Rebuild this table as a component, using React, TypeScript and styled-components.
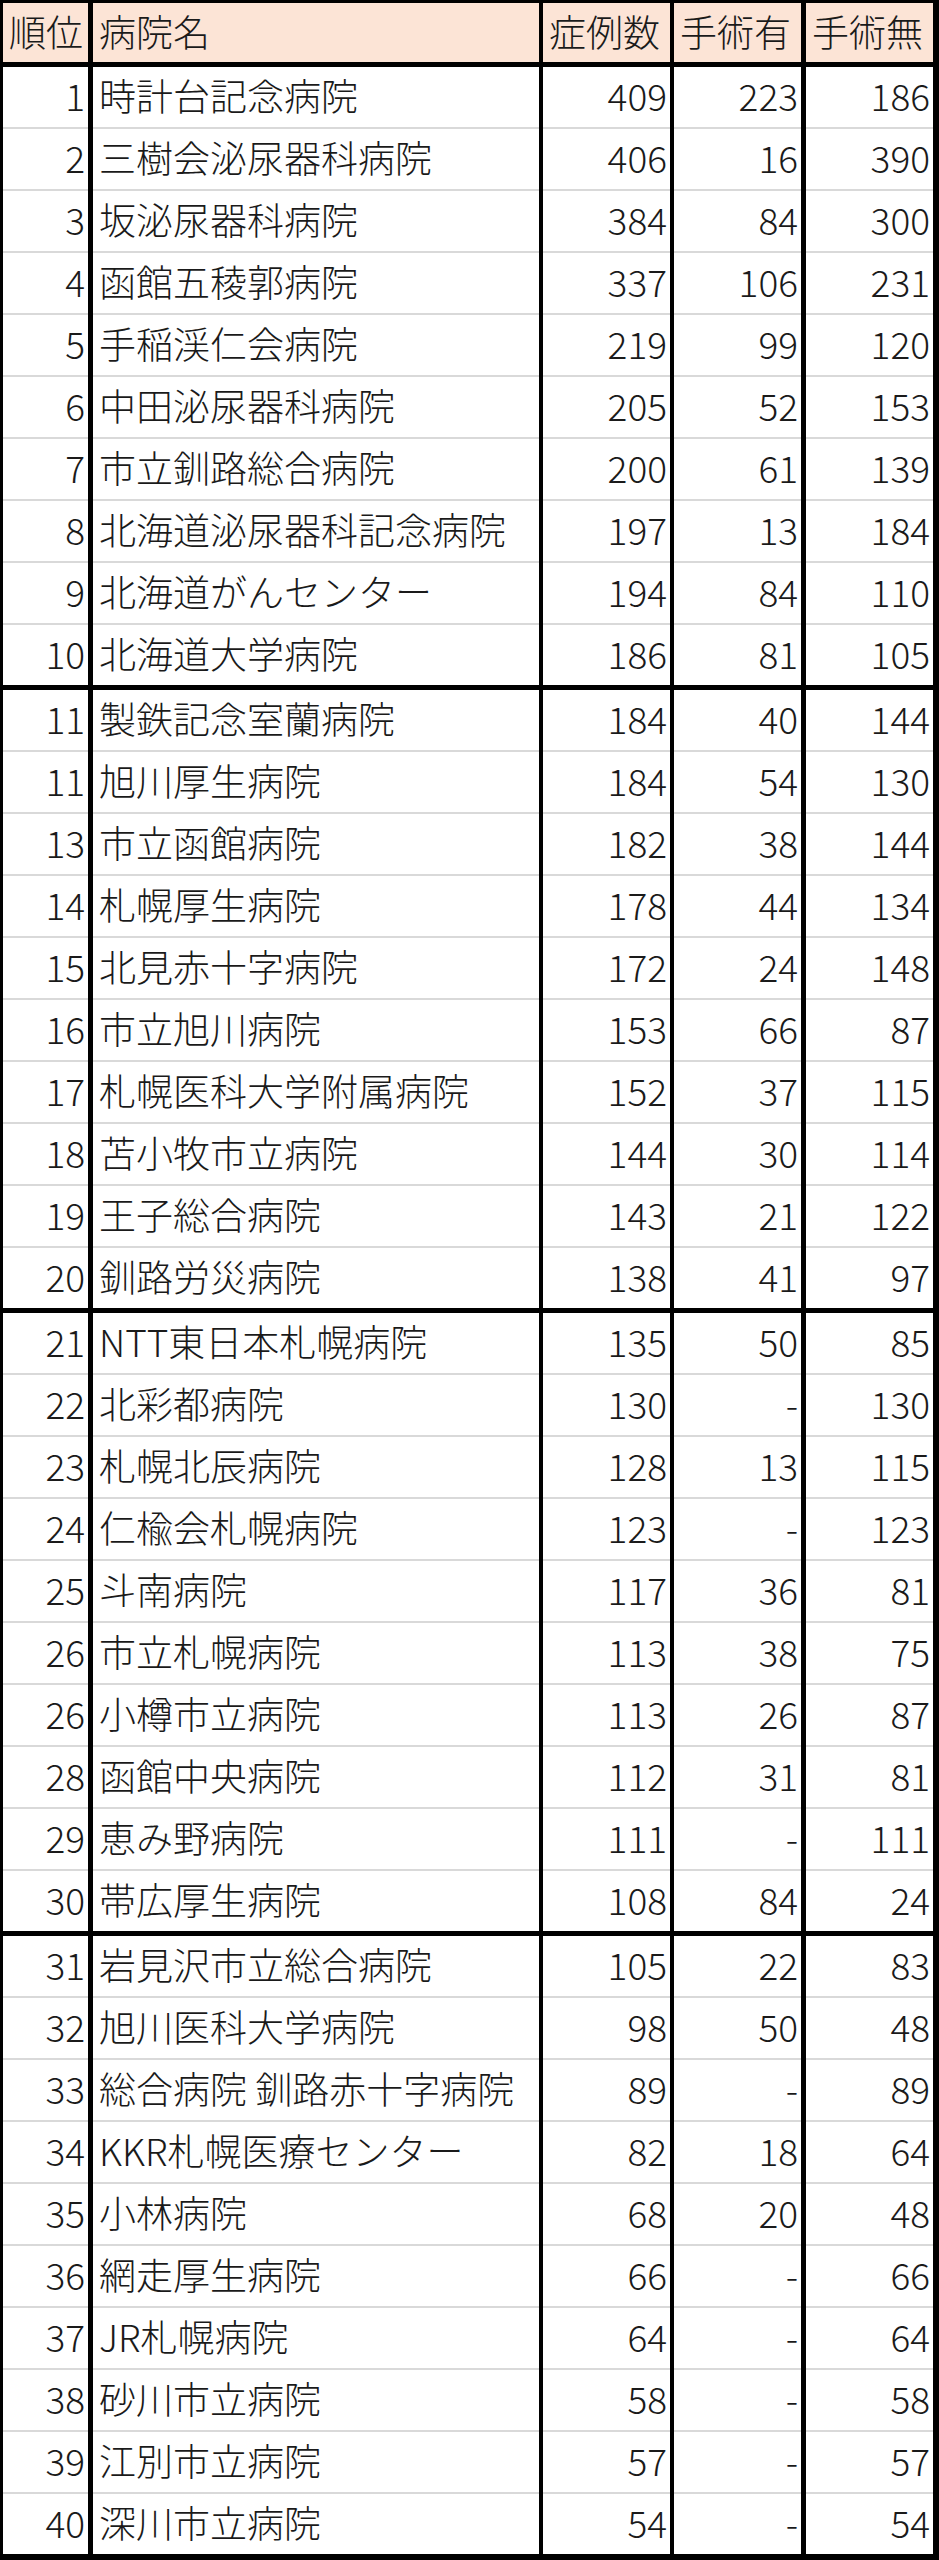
import React from "react";
import styled, { createGlobalStyle } from "styled-components";

type Hospital = {
  rank: number;
  name: string;
  cases: number;
  surgery: number | null;
  noSurgery: number;
};

const hospitals: Hospital[] = [
  { rank: 1, name: "時計台記念病院", cases: 409, surgery: 223, noSurgery: 186 },
  { rank: 2, name: "三樹会泌尿器科病院", cases: 406, surgery: 16, noSurgery: 390 },
  { rank: 3, name: "坂泌尿器科病院", cases: 384, surgery: 84, noSurgery: 300 },
  { rank: 4, name: "函館五稜郭病院", cases: 337, surgery: 106, noSurgery: 231 },
  { rank: 5, name: "手稲渓仁会病院", cases: 219, surgery: 99, noSurgery: 120 },
  { rank: 6, name: "中田泌尿器科病院", cases: 205, surgery: 52, noSurgery: 153 },
  { rank: 7, name: "市立釧路総合病院", cases: 200, surgery: 61, noSurgery: 139 },
  { rank: 8, name: "北海道泌尿器科記念病院", cases: 197, surgery: 13, noSurgery: 184 },
  { rank: 9, name: "北海道がんセンター", cases: 194, surgery: 84, noSurgery: 110 },
  { rank: 10, name: "北海道大学病院", cases: 186, surgery: 81, noSurgery: 105 },
  { rank: 11, name: "製鉄記念室蘭病院", cases: 184, surgery: 40, noSurgery: 144 },
  { rank: 11, name: "旭川厚生病院", cases: 184, surgery: 54, noSurgery: 130 },
  { rank: 13, name: "市立函館病院", cases: 182, surgery: 38, noSurgery: 144 },
  { rank: 14, name: "札幌厚生病院", cases: 178, surgery: 44, noSurgery: 134 },
  { rank: 15, name: "北見赤十字病院", cases: 172, surgery: 24, noSurgery: 148 },
  { rank: 16, name: "市立旭川病院", cases: 153, surgery: 66, noSurgery: 87 },
  { rank: 17, name: "札幌医科大学附属病院", cases: 152, surgery: 37, noSurgery: 115 },
  { rank: 18, name: "苫小牧市立病院", cases: 144, surgery: 30, noSurgery: 114 },
  { rank: 19, name: "王子総合病院", cases: 143, surgery: 21, noSurgery: 122 },
  { rank: 20, name: "釧路労災病院", cases: 138, surgery: 41, noSurgery: 97 },
  { rank: 21, name: "NTT東日本札幌病院", cases: 135, surgery: 50, noSurgery: 85 },
  { rank: 22, name: "北彩都病院", cases: 130, surgery: null, noSurgery: 130 },
  { rank: 23, name: "札幌北辰病院", cases: 128, surgery: 13, noSurgery: 115 },
  { rank: 24, name: "仁楡会札幌病院", cases: 123, surgery: null, noSurgery: 123 },
  { rank: 25, name: "斗南病院", cases: 117, surgery: 36, noSurgery: 81 },
  { rank: 26, name: "市立札幌病院", cases: 113, surgery: 38, noSurgery: 75 },
  { rank: 26, name: "小樽市立病院", cases: 113, surgery: 26, noSurgery: 87 },
  { rank: 28, name: "函館中央病院", cases: 112, surgery: 31, noSurgery: 81 },
  { rank: 29, name: "恵み野病院", cases: 111, surgery: null, noSurgery: 111 },
  { rank: 30, name: "帯広厚生病院", cases: 108, surgery: 84, noSurgery: 24 },
  { rank: 31, name: "岩見沢市立総合病院", cases: 105, surgery: 22, noSurgery: 83 },
  { rank: 32, name: "旭川医科大学病院", cases: 98, surgery: 50, noSurgery: 48 },
  { rank: 33, name: "総合病院 釧路赤十字病院", cases: 89, surgery: null, noSurgery: 89 },
  { rank: 34, name: "KKR札幌医療センター", cases: 82, surgery: 18, noSurgery: 64 },
  { rank: 35, name: "小林病院", cases: 68, surgery: 20, noSurgery: 48 },
  { rank: 36, name: "網走厚生病院", cases: 66, surgery: null, noSurgery: 66 },
  { rank: 37, name: "JR札幌病院", cases: 64, surgery: null, noSurgery: 64 },
  { rank: 38, name: "砂川市立病院", cases: 58, surgery: null, noSurgery: 58 },
  { rank: 39, name: "江別市立病院", cases: 57, surgery: null, noSurgery: 57 },
  { rank: 40, name: "深川市立病院", cases: 54, surgery: null, noSurgery: 54 },
];

// widths of each column and the black rule on its left
const columns = [
  { width: 85, rule: 0 },
  { width: 446, rule: 5 },
  { width: 127, rule: 4 },
  { width: 127, rule: 4 },
  { width: 127, rule: 5 },
];

const GlobalStyle = createGlobalStyle`
  html, body {
    margin: 0;
    padding: 0;
    background: #fff;
  }
  body {
    font-family: "Noto Sans CJK JP", "Noto Sans", sans-serif;
    color: #1a1a1a;
  }
`;

const Sheet = styled.div`
  width: 939px;
  box-sizing: border-box;
  border-top: 3px solid #000;
  border-left: 3px solid #000;
  border-right: 6px solid #000;
  border-bottom: 6px solid #000;
  display: flex;
  flex-direction: column;
  background: #000;
`;

const Group = styled.div<{ $first?: boolean }>`
  display: flex;
  flex-direction: column;
  margin-top: ${(p) => (p.$first ? 0 : 5)}px;
`;

const Row = styled.div`
  display: flex;
  background: #000;
`;

const Cell = styled.div<{
  $width: number;
  $rule: number;
  $height: number;
  $align: "left" | "right";
  $head?: boolean;
  $line?: boolean;
}>`
  width: ${(p) => p.$width}px;
  margin-left: ${(p) => p.$rule}px;
  height: ${(p) => p.$height}px;
  box-sizing: border-box;
  background: ${(p) => (p.$head ? "#fce4d6" : "#fff")};
  border-bottom: ${(p) => (p.$line ? "2px solid #d9d9d9" : "none")};
  display: flex;
  align-items: center;
  justify-content: ${(p) => (p.$align === "right" ? "flex-end" : "flex-start")};
  padding: ${(p) => (p.$align === "right" ? "0 3px 3px 0" : "0 0 3px 6px")};
  font-size: 37px;
  font-weight: 300;
  line-height: 1;
  white-space: nowrap;
  overflow: hidden;
`;

const headers = ["順位", "病院名", "症例数", "手術有", "手術無"];

const App: React.FC = () => {
  const groups: Hospital[][] = [];
  for (let i = 0; i < hospitals.length; i += 10) {
    groups.push(hospitals.slice(i, i + 10));
  }

  return (
    <>
      <GlobalStyle />
      <Sheet>
        <Group $first>
          <Row>
            {headers.map((h, i) => (
              <Cell
                key={h}
                $width={columns[i].width}
                $rule={columns[i].rule}
                $height={59}
                $align="left"
                $head
              >
                {h}
              </Cell>
            ))}
          </Row>
        </Group>
        {groups.map((group, gi) => (
          <Group key={gi}>
            {group.map((item, ri) => {
              const line = ri < group.length - 1;
              const h = line ? 62 : 60;
              const values = [
                String(item.rank),
                item.name,
                String(item.cases),
                item.surgery === null ? "-" : String(item.surgery),
                String(item.noSurgery),
              ];
              return (
                <Row key={ri}>
                  {values.map((v, ci) => (
                    <Cell
                      key={ci}
                      $width={columns[ci].width}
                      $rule={columns[ci].rule}
                      $height={h}
                      $align={ci === 1 ? "left" : "right"}
                      $line={line}
                    >
                      {v}
                    </Cell>
                  ))}
                </Row>
              );
            })}
          </Group>
        ))}
      </Sheet>
    </>
  );
};

export default App;
